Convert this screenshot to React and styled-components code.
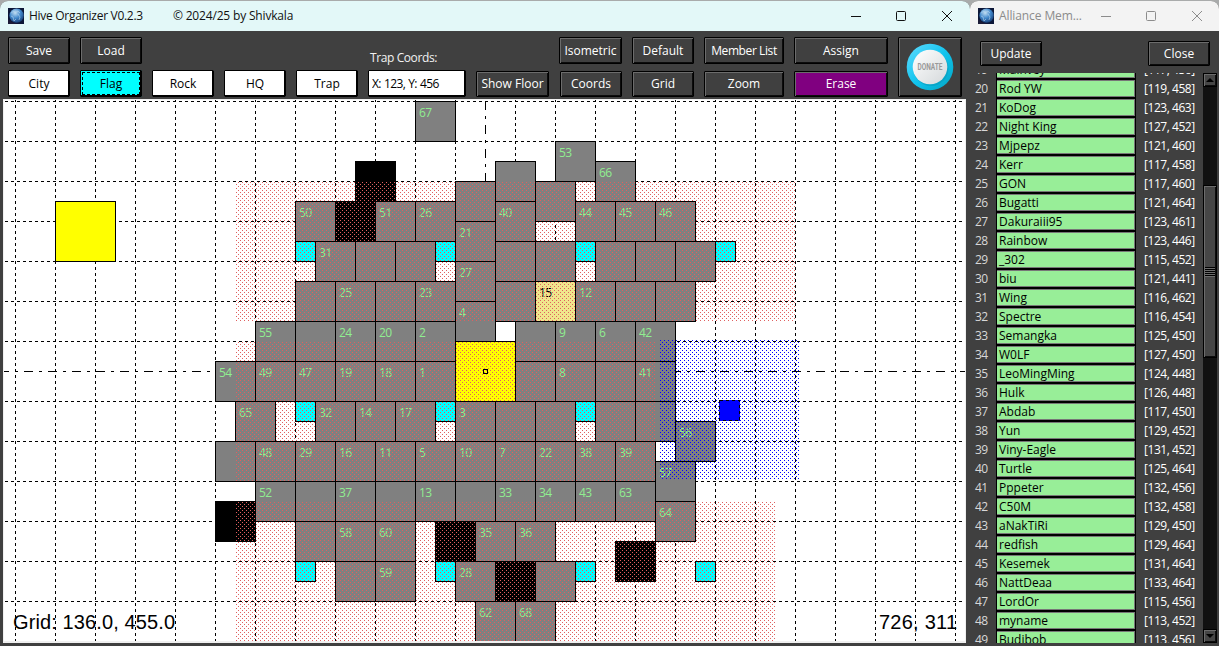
import React from 'react';
import styled, { createGlobalStyle, css } from 'styled-components';

const Global = createGlobalStyle`
  * { box-sizing: border-box; }
  body { margin: 0; overflow: hidden; background: #3c3c3c; }
  #root { font: 12px/16px "Open Sans", "Noto Sans", sans-serif; }
`;

const Desktop = styled.div`
  display: flex;
  width: 1219px;
  height: 646px;
  overflow: hidden;
  background: #a9abab;
`;
const Window = styled.section`
  display: flex;
  flex-direction: column;
  width: ${p => p.$width}px;
  height: 645px;
  margin-top: 1px;
  background: #404040;
  border-radius: 8px 8px 0 0;
  overflow: hidden;
  flex: none;
`;
const TitleBar = styled.header`
  display: flex;
  align-items: center;
  height: 30px;
  flex: none;
  padding-left: 8px;
  background: ${p => (p.$active ? '#e3f8f8' : '#f3f3f3')};
  color: ${p => (p.$active ? '#111' : '#8c8c8c')};
`;
const Title = styled.span`
  margin-left: 5px;
  white-space: pre;
  letter-spacing: ${p => p.$spacing || 0}px;
`;
const Credit = styled(Title)`
  margin-left: ${p => p.$gap}px;
`;
const Controls = styled.svg`
  margin-left: auto;
  margin-right: ${p => p.$right}px;
  flex: none;
`;

const raised = css`
  border: 1px solid #000;
  box-shadow: inset 1px 1px 0 #6c6c6c, inset -1px -1px 0 #0c0c0c;
`;
const Button = styled.button`
  ${raised}
  width: ${p => p.$w || 62}px;
  height: ${p => p.$h || 27}px;
  margin: ${p => p.$margin || 0};
  padding: ${p => (p.$h === 26 ? '0 0 1px' : '1px 0 0')};
  border-radius: 1px;
  font: inherit;
  flex: none;
  white-space: nowrap;
  letter-spacing: ${p => p.$spacing || 0}px;
  color: #fff;
  background: ${p => p.$bg || '#404040'};
`;
const ToolButton = styled(Button)`
  color: #000;
  background: #fff;
  box-shadow: inset -1px -1px 0 #000;
`;
const SelectedTool = styled(ToolButton)`
  background: #0ff;
  border: 1px solid #000;
  outline: 1px dashed #000;
  outline-offset: -3px;
`;
const Toolbar = styled.div`
  display: flex;
  justify-content: space-between;
  height: 68px;
  padding: 6px 8px 2px;
  flex: none;
`;
const ToolGroup = styled.div`
  display: flex;
  gap: 10px;
`;
const Stack = styled.div`
  display: flex;
  flex-direction: column;
  justify-content: space-between;
  height: 60px;
`;
const TrapField = styled(Stack)`
  width: 98px;
`;
const FieldLabel = styled.label`
  color: #f2f2f2;
  padding: 13px 0 0 2px;
  letter-spacing: -0.4px;
`;
const Field = styled.input`
  width: 98px;
  height: 27px;
  padding: 0 0 0 3px;
  border: 1px solid #000;
  box-shadow: inset -1px -1px 0 #000;
  border-radius: 1px;
  font: inherit;
  letter-spacing: -0.6px;
  word-spacing: 0.5px;
  background: #fff;
  color: #000;
`;
const DonateButton = styled(Button)`
  width: 64px;
  height: 60px;
  padding: 0;
  display: grid;
  place-items: center;
`;
const CanvasFrame = styled.div`
  width: 963px;
  height: 544px;
  margin-left: 3px;
  border: 1px solid #f0f0f0;
  border-bottom-width: 2px;
  background: #fff;
  overflow: hidden;
`;

const PanelHead = styled.div`
  display: flex;
  justify-content: space-between;
  height: 42px;
  padding: 10px 9px 0 10px;
  flex: none;
`;
const PanelBody = styled.div`
  display: flex;
  height: 570px;
`;
const Members = styled.div`
  width: 233px;
  height: 570px;
  overflow: hidden;
`;
const MemberRow = styled.div`
  display: grid;
  grid-template-columns: 26px 140px 1fr;
  height: 19px;
  color: #fff;
  &:first-child { margin-top: -13px; }
`;
const Rank = styled.span`
  color: #d8d8d8;
  padding: 2px 0 0 5px;
  letter-spacing: -0.5px;
`;
const MemberName = styled.span`
  height: 19px;
  border: 1px solid #000;
  box-shadow: inset -1px -1px 0 #777, inset 0 1px 0 #777;
  background: #98ee98;
  color: #000;
  padding-left: 2px;
  line-height: 18px;
`;
const Coord = styled.span`
  padding: 2px 0 0 8px;
  letter-spacing: -0.45px;
`;
const Scrollbar = styled.div`
  display: flex;
  flex-direction: column;
  width: 14px;
  background: #111;
`;
const ArrowButton = styled.div`
  ${raised}
  display: grid;
  place-items: center;
  height: 14px;
  background: #464646;
`;
const Arrow = styled.i`
  border: 4px solid transparent;
  border-top-width: ${p => (p.$up ? 0 : 4)}px;
  border-bottom-width: ${p => (p.$up ? 4 : 0)}px;
  border-${p => (p.$up ? 'bottom' : 'top')}-color: #000;
`;
const Thumb = styled.div`
  ${raised}
  display: grid;
  place-items: center;
  height: 173px;
  margin: 98px 0 auto;
  background: #464646;
`;
const Grip = styled.i`
  width: 10px;
  height: 10px;
  background: repeating-linear-gradient(#000 0 1px, #6c6c6c 1px 2px);
`;

function AppIcon() {
  return (
    <svg width="16" height="16" viewBox="0 0 16 16">
      <defs>
        <radialGradient id="planet" cx=".4" cy=".3" r=".75">
          <stop offset="0" stopColor="#c2def2" />
          <stop offset=".5" stopColor="#4389cc" />
          <stop offset="1" stopColor="#153a72" />
        </radialGradient>
      </defs>
      <rect width="16" height="16" fill="#0c1637" />
      <circle cx="8.6" cy="7.6" r="7.2" fill="url(#planet)" />
      <path d="M3 5l3-2 1 2 3-2 2 2M3 8l2 1 1 4 2-2M10 6l2 3-1 3" stroke="#b4d6ee" fill="none" opacity=".6" />
      <path d="M0 11l4 3 6 2H0z" fill="#1c1b38" />
    </svg>
  );
}

function WindowControls({ color, right }) {
  return (
    <Controls width="104" height="12" viewBox="0 0 104 12" $right={right} fill="none" stroke={color}>
      <path d="M0 6.5h10" />
      <rect x="45.5" y="1.5" width="9" height="9" rx="1" />
      <path d="M91 1l10 10M101 1L91 11" />
    </Controls>
  );
}

function DonateIcon() {
  return (
    <svg width="48" height="48" viewBox="0 0 48 48">
      <defs>
        <linearGradient id="ring" x1="0" y1="0" x2="1" y2="1">
          <stop offset="0" stopColor="#62dcff" />
          <stop offset=".5" stopColor="#12c4ee" />
          <stop offset="1" stopColor="#02a5c4" />
        </linearGradient>
        <linearGradient id="knob" x1="0" y1="0" x2="1" y2="1">
          <stop offset="0" stopColor="#fff" />
          <stop offset="1" stopColor="#d4d8da" />
        </linearGradient>
      </defs>
      <circle cx="24" cy="24" r="23.3" fill="url(#ring)" />
      <circle cx="25" cy="25.5" r="17.5" fill="#0797b8" opacity=".5" />
      <circle cx="24" cy="24" r="17.3" fill="url(#knob)" />
      <text x="24" y="27.2" textAnchor="middle" textLength="25" lengthAdjust="spacingAndGlyphs"
        fontFamily="Roboto, sans-serif" fontWeight="700" fontSize="9" fill="#999">DONATE</text>
    </svg>
  );
}

const cityRows = [
  [101, [[415, 67]]],
  [141, [[555, 53]]],
  [161, [[595, 66], [495]]],
  [181, [[455], [535]]],
  [201, [[295, 50], [375, 51], [415, 26], [495, 40], [575, 44], [615, 45], [655, 46]]],
  [221, [[455, 21]]],
  [241, [[315, 31], [355], [395], [495], [535], [595], [635], [675]]],
  [261, [[455, 27]]],
  [281, [[295], [335, 25], [375], [415, 23], [495], [535, 15, 'own'], [575, 12], [615], [655]]],
  [301, [[455, 4]]],
  [321, [[255, 55], [295], [335, 24], [375, 20], [415, 2], [515], [555, 9], [595, 6], [635, 42]]],
  [361, [[215, 54], [255, 49], [295, 47], [335, 19], [375, 18], [415, 1], [515], [555, 8], [595], [635, 41]]],
  [401, [[235, 65], [315, 32], [355, 14], [395, 17], [455, 3], [495], [535], [595], [635]]],
  [421, [[675, 56]]],
  [441, [[215], [255, 48], [295, 29], [335, 16], [375, 11], [415, 5], [455, 10], [495, 7], [535, 22], [575, 38], [615, 39]]],
  [461, [[655, 57]]],
  [481, [[255, 52], [295], [335, 37], [375], [415, 13], [455], [495, 33], [535, 34], [575, 43], [615, 63]]],
  [501, [[655, 64]]],
  [521, [[295], [335, 58], [375, 60], [475, 35], [515, 36]]],
  [561, [[335], [375, 59], [455, 28], [535]]],
  [601, [[475, 62], [515, 68]]],
];
const rocks = [[355, 161], [335, 201], [215, 501], [435, 521], [495, 561], [615, 541]];
const flags = [
  [295, 241], [435, 241], [575, 241], [715, 241],
  [295, 401], [435, 401], [575, 401],
  [295, 561], [435, 561], [575, 561], [695, 561],
];
const areas = [[235, 181, 561], [235, 341, 421], [235, 501, 541]];
const range = (n, start, step) => Array.from({ length: n }, (_, i) => start + i * step);

// Grid lines run outward from the edges of the central 3x3 trap.
const columns = [...range(12, 15.5, 40), ...range(12, 515.5, 40)];
const lines = [...range(7, 101.5, 40), ...range(6, 401.5, 40)];

function Box({ x, y, size, fill }) {
  return <rect x={x + 0.5} y={y + 0.5} width={size} height={size} fill={fill} stroke="#000" />;
}

function HiveMap() {
  return (
    <svg width="961" height="541" viewBox="4 100 961 541" shapeRendering="crispEdges" style={{ display: 'block' }}>
      <defs>
        {[['redDots', '#e06060'], ['blueDots', '#0000ff']].map(([id, color]) => (
          <pattern key={id} id={id} width="4" height="4" patternUnits="userSpaceOnUse">
            <path d="M0 0h1v1h-1zM2 2h1v1h-1z" fill={color} />
          </pattern>
        ))}
      </defs>
      <g stroke="#000" strokeDasharray="3 3">
        {columns.map(x => <path key={x} d={`M${x} 99V641`} />)}
        {lines.map(y => <path key={y} d={`M5 ${y}H966`} />)}
      </g>
      <g stroke="#000" strokeDasharray="9 6 3 6">
        <path d="M485.5 101V641M0 371.5H966" />
      </g>
      <Box x={55} y={201} size={60} fill="#ff0" />
      {cityRows.map(([y, cells]) => cells.map(([x, , own]) => (
        <Box key={`${x}-${y}`} x={x} y={y} size={40} fill={own ? '#f0e68c' : '#808080'} />
      )))}
      <Box x={455} y={341} size={60} fill="#ff0" />
      {rocks.map(([x, y]) => <Box key={`${x}-${y}`} x={x} y={y} size={40} fill="#000" />)}
      {flags.map(([x, y]) => <Box key={`${x}-${y}`} x={x} y={y} size={20} fill="#0ff" />)}
      <Box x={483} y={369} size={4} fill="none" />
      <g fontFamily='"Open Sans", sans-serif' fontSize="12" letterSpacing="-0.5">
        {cityRows.map(([y, cells]) => cells.map(([x, n, own]) => n && (
          <text key={n} x={x + 4} y={y + 16} fill={own ? '#000' : '#90ee90'}>{n}</text>
        )))}
      </g>
      {areas.map(([x, y, w]) => <rect key={y} x={x} y={y} width={w} height="140" fill="url(#redDots)" />)}
      <rect x="659" y="340" width="140" height="140" fill="url(#blueDots)" />
      <rect x="719" y="400" width="21" height="21" fill="#00f" />
      <rect x="719.5" y="400.5" width="20" height="20" fill="none" stroke="#000" strokeDasharray="3 3" />
      <g fontFamily='"Liberation Sans", Arial, sans-serif' fontSize="20" fill="#000">
        <text x="13" y="629" textLength="162">Grid: 136.0, 455.0</text>
        <text x="879" y="629" textLength="78">726, 311</text>
      </g>
    </svg>
  );
}

const members = [
  [19, 'Mainvey', '[117, 456]'], [20, 'Rod YW', '[119, 458]'], [21, 'KoDog', '[123, 463]'],
  [22, 'Night King', '[127, 452]'], [23, 'Mjpepz', '[121, 460]'], [24, 'Kerr', '[117, 458]'],
  [25, 'GON', '[117, 460]'], [26, 'Bugatti', '[121, 464]'], [27, 'Dakuraiii95', '[123, 461]'],
  [28, 'Rainbow', '[123, 446]'], [29, '_302', '[115, 452]'], [30, 'biu', '[121, 441]'],
  [31, 'Wing', '[116, 462]'], [32, 'Spectre', '[116, 454]'], [33, 'Semangka', '[125, 450]'],
  [34, 'W0LF', '[127, 450]'], [35, 'LeoMingMing', '[124, 448]'], [36, 'Hulk', '[126, 448]'],
  [37, 'Abdab', '[117, 450]'], [38, 'Yun', '[129, 452]'], [39, 'Viny-Eagle', '[131, 452]'],
  [40, 'Turtle', '[125, 464]'], [41, 'Pppeter', '[132, 456]'], [42, 'C50M', '[132, 458]'],
  [43, 'aNakTiRi', '[129, 450]'], [44, 'redfish', '[129, 464]'], [45, 'Kesemek', '[131, 464]'],
  [46, 'NattDeaa', '[133, 464]'], [47, 'LordOr', '[115, 456]'], [48, 'myname', '[113, 452]'],
  [49, 'Budibob', '[113, 456]'],
];

export default function App() {
  return (
    <Desktop>
      <Global />
      <Window $width={970}>
        <TitleBar $active>
          <AppIcon />
          <Title $spacing={-0.29}>Hive Organizer V0.2.3</Title>
          <Credit $gap={30} $spacing={-0.17}>© 2024/25 by Shivkala</Credit>
          <WindowControls color="#111" right={15} />
        </TitleBar>
        <Toolbar>
          <ToolGroup>
            <Stack><Button>Save</Button><ToolButton>City</ToolButton></Stack>
            <Stack><Button>Load</Button><SelectedTool>Flag</SelectedTool></Stack>
            <ToolButton $margin="33px 0 0">Rock</ToolButton>
            <ToolButton $margin="33px 0 0">HQ</ToolButton>
            <ToolButton $margin="33px 0 0">Trap</ToolButton>
            <TrapField>
              <FieldLabel>Trap Coords:</FieldLabel>
              <Field defaultValue="X: 123, Y: 456" />
            </TrapField>
            <Button $w={73} $h={26} $margin="34px 0 0">Show Floor</Button>
          </ToolGroup>
          <ToolGroup>
            <Stack><Button $w={63}>Isometric</Button><Button $h={26} $margin="0 0 0 1px">Coords</Button></Stack>
            <Stack><Button>Default</Button><Button $h={26}>Grid</Button></Stack>
            <Stack><Button $w={80} $spacing={-0.4}>Member List</Button><Button $w={80} $h={26}>Zoom</Button></Stack>
            <Stack><Button $w={94}>Assign</Button><Button $w={94} $h={26} $bg="#800080">Erase</Button></Stack>
            <DonateButton><DonateIcon /></DonateButton>
          </ToolGroup>
        </Toolbar>
        <CanvasFrame><HiveMap /></CanvasFrame>
      </Window>
      <Window $width={249}>
        <TitleBar>
          <AppIcon />
          <Title $spacing={-0.1}>Alliance Mem...</Title>
          <WindowControls color="#8c8c8c" right={14} />
        </TitleBar>
        <PanelHead>
          <Button $h={25}>Update</Button>
          <Button $h={25}>Close</Button>
        </PanelHead>
        <PanelBody>
          <Members>
            {members.map(([rank, name, coord]) => (
              <MemberRow key={rank}>
                <Rank>{rank}</Rank>
                <MemberName>{name}</MemberName>
                <Coord>{coord}</Coord>
              </MemberRow>
            ))}
          </Members>
          <Scrollbar>
            <ArrowButton><Arrow $up /></ArrowButton>
            <Thumb><Grip /></Thumb>
            <ArrowButton><Arrow /></ArrowButton>
          </Scrollbar>
        </PanelBody>
      </Window>
    </Desktop>
  );
}
